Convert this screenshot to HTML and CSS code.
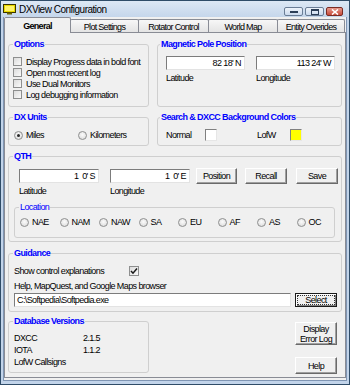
FILE: index.html
```html
<!DOCTYPE html>
<html>
<head>
<meta charset="utf-8">
<title>DXView Configuration</title>
<link rel="stylesheet" href="styles.css">
</head>
<body>
<div class="window">
  <div class="titlebar">
    <svg class="appicon" width="13" height="11" viewBox="0 0 13 11">
      <rect x="0.5" y="0.5" width="12" height="8" fill="#e8d800" stroke="#3a3500"/>
      <rect x="2" y="2" width="9" height="5" fill="#fff36a"/>
      <rect x="4" y="8.5" width="5" height="2" fill="#6b6200"/>
    </svg>
    <span class="title">DXView Configuration</span>
    <div class="caps">
      <span class="cap"><svg width="8" height="4" viewBox="0 0 8 4"><rect x="0" y="1" width="8" height="2" fill="#2c3e57"/></svg></span>
      <span class="cap"><svg width="8" height="6" viewBox="0 0 8 6"><rect x="0.5" y="0.5" width="7" height="5" fill="none" stroke="#2c3e57"/><rect x="0" y="0" width="8" height="2" fill="#2c3e57"/></svg></span>
      <span class="cap close"><svg width="8" height="6" viewBox="0 0 8 6"><path d="M1 0.5 L7 5.5 M7 0.5 L1 5.5" stroke="#fff" stroke-width="1.6"/></svg></span>
    </div>
  </div>
  <div class="client">
    <div class="tabs">
      <div class="tab sel t1">General</div>
      <div class="tab t2">Plot Settings</div>
      <div class="tab t3">Rotator Control</div>
      <div class="tab t4">World Map</div>
      <div class="tab t5">Entity Overides</div>
    </div>
    <div class="panel">
      <div class="row r1">
        <fieldset class="grp g-left g-options">
          <legend>Options</legend>
          <div class="opts">
            <div class="chk"><span class="cb"></span><span>Display Progress data in bold font</span></div>
            <div class="chk"><span class="cb"></span><span>Open most recent log</span></div>
            <div class="chk"><span class="cb"></span><span>Use Dual Monitors</span></div>
            <div class="chk"><span class="cb"></span><span>Log debugging information</span></div>
          </div>
        </fieldset>
        <fieldset class="grp g-right g-mag">
          <legend>Magnetic Pole Position</legend>
          <div class="mag">
            <div class="fld"><div class="tb w79">82 18' N</div><div class="lbl">Latitude</div></div>
            <div class="fld"><div class="tb w79">113 24' W</div><div class="lbl">Longitude</div></div>
          </div>
        </fieldset>
      </div>
      <div class="row r2">
        <fieldset class="grp g-left g-units">
          <legend>DX Units</legend>
          <div class="units">
            <div class="rad miles"><span class="rb on"></span><span>Miles</span></div>
            <div class="rad"><span class="rb"></span><span>Kilometers</span></div>
          </div>
        </fieldset>
        <fieldset class="grp g-right g-colors">
          <legend>Search &amp; DXCC Background Colors</legend>
          <div class="colors">
            <span class="clbl normal">Normal</span><span class="swatch white"></span>
            <span class="clbl lofw">LofW</span><span class="swatch yellow"></span>
          </div>
        </fieldset>
      </div>
      <fieldset class="grp g-qth">
        <legend>QTH</legend>
        <div class="qrow">
          <div class="tb w80">1  0' S</div>
          <div class="tb w80 lon">1  0' E</div>
          <div class="btn b-pos">Position</div>
          <div class="btn b-recall">Recall</div>
          <div class="btn b-save">Save</div>
        </div>
        <div class="qlabels">
          <span class="ql1">Latitude</span><span>Longitude</span>
        </div>
        <fieldset class="grp g-loc">
          <legend>Location</legend>
          <div class="locs">
            <div class="rad"><span class="rb"></span><span>NAE</span></div>
            <div class="rad"><span class="rb"></span><span>NAM</span></div>
            <div class="rad"><span class="rb"></span><span>NAW</span></div>
            <div class="rad"><span class="rb"></span><span>SA</span></div>
            <div class="rad"><span class="rb"></span><span>EU</span></div>
            <div class="rad"><span class="rb"></span><span>AF</span></div>
            <div class="rad"><span class="rb"></span><span>AS</span></div>
            <div class="rad"><span class="rb"></span><span>OC</span></div>
          </div>
        </fieldset>
      </fieldset>
      <fieldset class="grp g-guide">
        <legend>Guidance</legend>
        <div class="guide">
          <div class="grow1"><span class="gtxt">Show control explanations</span><span class="cb checked"><svg width="8" height="8" viewBox="0 0 8 8"><path d="M1 4 L3 6.2 L7 1.5" fill="none" stroke="#1a1a1a" stroke-width="1.5"/></svg></span></div>
          <div class="grow2">Help, MapQuest, and Google Maps browser</div>
          <div class="grow3">
            <div class="tb path">C:\Softpedia\Softpedia.exe</div>
            <div class="btn b-select"><span class="focus">Select</span></div>
          </div>
        </div>
      </fieldset>
      <div class="row r5">
        <fieldset class="grp g-left g-db">
          <legend>Database Versions</legend>
          <div class="db">
            <div class="dbrow"><span class="dbk">DXCC</span><span>2.1.5</span></div>
            <div class="dbrow"><span class="dbk">IOTA</span><span>1.1.2</span></div>
            <div class="dbrow"><span class="dbk">LofW Callsigns</span><span></span></div>
          </div>
        </fieldset>
        <div class="sidebtns">
          <div class="btn b-err">Display<br>Error Log</div>
          <div class="btn b-help">Help</div>
        </div>
      </div>
    </div>
  </div>
</div>
</body>
</html>
```
FILE: styles.css
```css
* { box-sizing: border-box; }
html, body { margin: 0; padding: 0; }
body {
  width: 350px;
  height: 385px;
  overflow: hidden;
  font-family: "Liberation Sans", Arial, sans-serif;
  font-size: 9px;
  letter-spacing: -0.6px;
  color: #000;
  background: #1d5f80;
}
.window {
  width: 350px;
  height: 385px;
  border: 1px solid #2f4c68;
  background: #c2d4ea;
  padding: 0 2px 3px;
  display: flex;
  flex-direction: column;
}
.titlebar {
  height: 16px;
  margin: 0 -2px;
  padding: 0 6px 0 2px;
  display: flex;
  align-items: center;
  background: linear-gradient(#dde8f5, #c5d6eb);
}
.appicon { flex: none; margin-right: 3px; margin-top: 1px; }
.title { font-size: 10px; letter-spacing: -0.5px; color: #000; margin-top: 1px; }
.caps {
  margin-left: auto;
  align-self: flex-end;
  margin-bottom: 1px;
  display: flex;
  gap: 2px;
}
.cap {
  width: 19px;
  height: 9px;
  border: 1px solid #6a7d96;
  border-radius: 2px;
  background: linear-gradient(#eef3fa, #cbdaee);
  display: flex;
  align-items: center;
  justify-content: center;
}
.cap.close {
  width: 17px;
  border-color: #7a2b23;
  background: linear-gradient(#e79a8d, #c74a3a);
}
.client {
  flex: 1;
  background: #f0f0f0;
  border: 1px solid #7f95b3;
  border-top: none;
  padding-bottom: 2px;
  display: flex;
  flex-direction: column;
}
.tabs {
  height: 15px;
  display: flex;
  align-items: flex-end;
}
.tab {
  height: 13px;
  border: 1px solid #898c95;
  border-bottom: none;
  border-radius: 2px 2px 0 0;
  background: linear-gradient(#f7f7f7, #e4e4e4);
  display: flex;
  align-items: center;
  justify-content: center;
  letter-spacing: -0.7px;
  padding-top: 1px;
}
.tab + .tab { margin-left: -1px; }
.tab.sel {
  height: 16px;
  margin-bottom: -1px;
  background: #f0f0f0;
  font-weight: bold;
  position: relative;
  z-index: 1;
  padding-top: 0;
}
.t1 { width: 67px; }
.t2 { width: 69px; }
.t3 { width: 71px; }
.t4 { width: 70px; }
.t5 { width: 68px; }
.panel {
  height: 346px;
  border: 1px solid #898c95;
  padding: 6px 3px 0;
  display: flex;
  flex-direction: column;
}
.row { display: flex; gap: 8px; }
.r2 { margin-top: 5px; }
.r5 { margin-top: 4px; }
.grp {
  margin: 0;
  padding: 0;
  border: 1px solid #cfcfcf;
  border-radius: 3px;
  min-width: 0;
}
.grp > legend {
  padding: 0 1px;
  margin-left: 4px;
  height: 11px;
  line-height: 11px;
  color: #0000ff;
  font-weight: bold;
}
.g-right > legend { margin-left: 2px; }
.g-left { width: 141px; flex: none; }
.g-right { flex: 1; }
.r1 .grp { height: 68px; }
.r2 .grp { height: 34px; }

.opts { padding: 6px 0 0 4px; }
.chk { display: flex; align-items: center; height: 11px; gap: 4px; }
.cb {
  width: 9px;
  height: 9px;
  flex: none;
  border: 1px solid #8e8f8f;
  background: linear-gradient(135deg, #dcdcdc, #fafafa);
  display: flex;
  align-items: center;
  justify-content: center;
}
.cb.checked { width: 10px; height: 10px; }

.mag { display: flex; gap: 11px; padding: 6px 0 0 8px; }
.fld { display: flex; flex-direction: column; }
.lbl { margin-top: 3px; line-height: 11px; }
.tb {
  height: 14px;
  background: #fff;
  border: 1px solid;
  border-color: #7c7c7c #e3e3e3 #e3e3e3 #7c7c7c;
  text-align: right;
  padding-right: 3px;
  line-height: 12px;
  white-space: pre;
}
.w79 { width: 79px; }
.w80 { width: 80px; }

.units { display: flex; align-items: center; height: 12px; margin-top: 6px; padding-left: 5px; }
.rad { display: flex; align-items: center; gap: 3px; }
.miles { width: 64px; }
.rb {
  width: 9px;
  height: 9px;
  flex: none;
  border: 1px solid #8e8f8f;
  border-radius: 50%;
  background: radial-gradient(circle at 50% 40%, #fbfbfb, #d8d8d8);
  display: flex;
  align-items: center;
  justify-content: center;
}
.rb.on::after {
  content: "";
  width: 3px;
  height: 3px;
  border-radius: 50%;
  background: #262626;
}

.colors { display: flex; align-items: center; height: 12px; margin-top: 6px; padding-left: 8px; }
.clbl.normal { width: 39px; }
.clbl.lofw { width: 33px; margin-left: 40px; }
.swatch {
  width: 12px;
  height: 12px;
  border: 1px solid;
  border-color: #808080 #e6e6e6 #e6e6e6 #808080;
}
.swatch.white { background: #fff; }
.swatch.yellow { background: #ffff00; }

.g-qth { margin-top: 5px; height: 91px; }
.qrow { display: flex; align-items: center; height: 16px; margin: 6px 0 0 10px; }
.qrow .lon { margin-left: 11px; }
.btn {
  height: 16px;
  border: 1px solid;
  border-color: #ffffff #6a6a6a #6a6a6a #ffffff;
  box-shadow: inset -1px -1px #a0a0a0;
  background: #f0f0f0;
  display: flex;
  align-items: center;
  justify-content: center;
  text-align: center;
}
.b-pos { width: 41px; margin-left: 6px; }
.b-recall { width: 42px; margin-left: 8px; }
.b-save { width: 42px; margin-left: 9px; }
.qlabels { display: flex; margin: 2px 0 0 10px; line-height: 11px; }
.ql1 { width: 91px; }
.g-loc { margin: 5px 6px 0 5px; height: 36px; }
.g-loc > legend { font-weight: normal; }
.locs {
  display: grid;
  grid-template-columns: repeat(8, 39.5px);
  align-items: center;
  height: 12px;
  margin: 3px 0 0 5px;
}

.g-guide { margin-top: 6px; height: 64px; }
.guide { padding: 6px 0 0 5px; }
.grow1 { display: flex; align-items: center; height: 11px; }
.gtxt { width: 115px; }
.grow2 { margin-top: 5px; line-height: 11px; }
.grow3 { display: flex; margin-top: 1px; gap: 4px; }
.tb.path { width: 277px; text-align: left; padding-left: 2px; }
.b-select {
  width: 42px;
  height: 14px;
  border-color: #1a1a1a;
  box-shadow: inset 1px 1px #fff, inset -1px -1px #808080;
  padding: 2px;
}
.focus {
  display: flex;
  align-items: center;
  justify-content: center;
  width: 100%;
  height: 100%;
  outline: 1px dotted #333;
}

.g-db { height: 57px; }
.db { padding: 5px 0 0 5px; }
.dbrow { display: flex; height: 12px; align-items: center; }
.dbk { width: 69px; }
.sidebtns {
  margin-left: auto;
  margin-right: 5px;
  display: flex;
  flex-direction: column;
  padding-top: 6px;
}
.b-err { width: 42px; height: 23px; line-height: 10px; }
.b-help { width: 42px; height: 17px; margin-top: 12px; }
```
